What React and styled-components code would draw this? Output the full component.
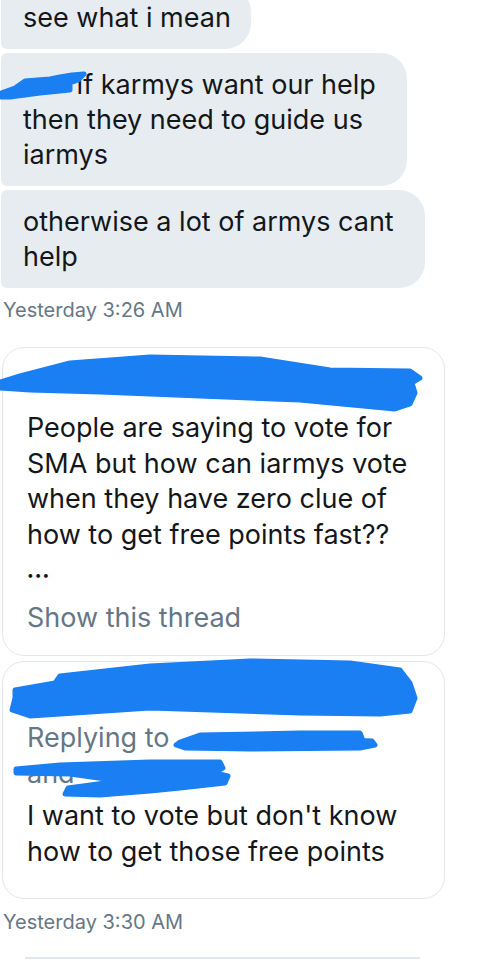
import React from 'react'
import styled, { createGlobalStyle } from 'styled-components'

const GlobalStyle = createGlobalStyle`
  body {
    margin: 0;
    background: #ffffff;
    font-family: Inter, "Liberation Sans", sans-serif;
    color: #14171a;
    overflow: hidden;
  }
`

const BLUE = '#1a7ff2'

const Page = styled.div`
  display: flex;
  flex-direction: column;
  align-items: flex-start;
  height: 963px;
  overflow: hidden;
`

const Bubble = styled.div`
  position: relative;
  box-sizing: border-box;
  width: ${props => props.width}px;
  margin: ${props => props.first ? '-14px' : '4px'} 0 0 1px;
  padding: 14px 22px;
  background: #e6ecf0;
  border-radius: 6px 26px 26px 6px;
  font-size: 27px;
  line-height: 35px;
  white-space: nowrap;
`

const Hidden = styled.span`
  display: inline-block;
  width: ${props => props.width}px;
`

const Timestamp = styled.div`
  margin: ${props => props.top}px 0 0 3px;
  font-size: 20px;
  line-height: 24px;
  color: #657786;
`

const Card = styled.div`
  position: relative;
  box-sizing: border-box;
  width: 443px;
  margin: ${props => props.top}px 0 0 2px;
  padding: 0 24px ${props => props.bottom}px;
  border: 1.5px solid #e1e8ed;
  border-radius: 22px;
  font-size: 27px;
  line-height: 35.5px;
  white-space: nowrap;
`

const CardHeader = styled.div`
  height: ${props => props.height}px;
`

const Muted = styled.div`
  color: #657786;
  margin-top: ${props => props.top || 0}px;
`

const Ellipsis = styled.div`
  margin-top: 5px;
  font-size: 12px;
  letter-spacing: 1px;
`

const Scribble = styled.svg`
  position: absolute;
  left: ${props => props.left}px;
  top: 0;
  overflow: visible;
  pointer-events: none;
`

const Divider = styled.div`
  width: 395px;
  height: 1.5px;
  margin: 23px 0 0 25px;
  background: #e1e8ed;
`

const Blob = ({ points }) => (
  <polygon points={points} fill={BLUE} stroke={BLUE} strokeWidth={5} strokeLinejoin="round" />
)

const App = () => (
  <Page>
    <GlobalStyle />
    <Bubble width={250} first>see what i mean</Bubble>
    <Bubble width={406}>
      <Scribble left={-1} width="100" height="60">
        <Blob points="1,40 15,35 25,28 50,26 60,24 72,22 84,21 78,27 70,30 70,37 40,40 10,44 1,44" />
      </Scribble>
      <Hidden width={46} /> if karmys want our help<br />
      then they need to guide us<br />
      iarmys
    </Bubble>
    <Bubble width={424}>
      otherwise a lot of armys cant<br />
      help
    </Bubble>
    <Timestamp top={10}>Yesterday 3:26 AM</Timestamp>

    <Card top={25} bottom={20}>
      <Scribble left={-3.5} width="480" height="70">
        <Blob points="0,34 20,28 70,15 150,9 260,11 330,22 410,23 420,30 412,35 415,45 410,56 395,61 300,52 200,48 100,44 30,42 0,40" />
      </Scribble>
      <CardHeader height={62} />
      People are saying to vote for<br />
      SMA but how can iarmys vote<br />
      when they have zero clue of<br />
      how to get free points fast??
      <Ellipsis>•••</Ellipsis>
      <Muted top={7}>Show this thread</Muted>
    </Card>

    <Card top={5} bottom={29}>
      <Scribble left={-3.5} width="480" height="140">
        <Blob points="15,28 55,21 60,14 150,4 250,-1 350,1 400,8 410,21 415,36 410,49 380,52 300,51 150,46 30,54 12,48 15,36" />
        <Blob points="180,80 200,73 300,71 360,71 362,76 350,78 372,79 375,83 360,86 250,87 185,86 176,83" />
        <Blob points="16,107 60,103 150,100 220,100 223,106 215,111 228,114 225,121 180,126 150,129 100,133 65,132 68,126 120,119 70,112 16,111" />
      </Scribble>
      <CardHeader height={58} />
      <Muted>Replying to</Muted>
      <Muted>and</Muted>
      <div style={{ marginTop: 7 }}>
        I want to vote but don't know<br />
        how to get those free points
      </div>
    </Card>
    <Timestamp top={11}>Yesterday 3:30 AM</Timestamp>
    <Divider />
  </Page>
)

export default App
